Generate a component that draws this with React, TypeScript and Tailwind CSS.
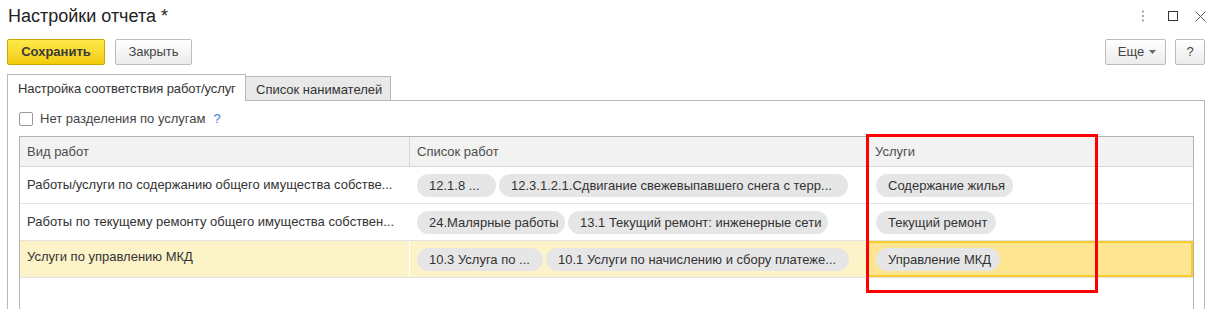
import React from 'react';

const font = { fontFamily: '"Liberation Sans", Arial, sans-serif' };

function Pill({ children, w }: { children: React.ReactNode; w: number }) {
    return (
        <span
            className="block shrink-0 h-[23px] pl-[12px] pr-[8px] rounded-full bg-[#e6e6e6] text-[#333] text-[13px] leading-[23px] whitespace-nowrap overflow-hidden"
            style={{ width: w }}
        >
            {children}
        </span>
    );
}

const rows = [
    {
        kind: 'Работы/услуги по содержанию общего имущества собстве...',
        works: [
            ['12.1.8 ...', 79],
            ['12.3.1.2.1.Сдвигание свежевыпавшего снега с терр...', 349],
        ] as [string, number][],
        service: ['Содержание жилья', 137] as [string, number],
    },
    {
        kind: 'Работы по текущему ремонту общего имущества собствен...',
        works: [
            ['24.Малярные работы', 148],
            ['13.1 Текущий ремонт: инженерные сети', 260],
        ] as [string, number][],
        service: ['Текущий ремонт', 120] as [string, number],
    },
    {
        kind: 'Услуги по управлению МКД',
        works: [
            ['10.3 Услуга по ...', 126],
            ['10.1 Услуги по начислению и сбору платеже...', 303],
        ] as [string, number][],
        service: ['Управление МКД', 124] as [string, number],
    },
];

export default function App() {
    return (
        <div className="relative w-[1215px] h-[309px] overflow-hidden bg-white text-[#333]" style={font}>
            {/* title bar */}
            <div className="flex items-start justify-between h-[37px] pl-[8px] pr-[9px] pt-[5px]">
                <h1 className="text-[18px] leading-[22px] text-[#222]">Настройки отчета *</h1>
                <div className="flex items-center pt-[5px]">
                    <svg width="4" height="12" viewBox="0 0 4 12" className="mr-[23px]">
                        <circle cx="2" cy="1.5" r="1" fill="#8c8c8c" />
                        <circle cx="2" cy="6" r="1" fill="#8c8c8c" />
                        <circle cx="2" cy="10.5" r="1" fill="#8c8c8c" />
                    </svg>
                    <svg width="10" height="10" viewBox="0 0 10 10" className="mr-[17px]">
                        <rect x="0.5" y="0.5" width="9" height="9" fill="none" stroke="#333" strokeWidth="1" />
                    </svg>
                    <svg width="11" height="11" viewBox="0 0 11 11">
                        <path d="M0.5 0.5 L10.5 10.5 M10.5 0.5 L0.5 10.5" stroke="#555" strokeWidth="1" />
                    </svg>
                </div>
            </div>

            {/* toolbar */}
            <div className="flex items-center justify-between h-[26px] mt-[2px] pl-[7px] pr-[10px]">
                <div className="flex gap-[10px]">
                    <button className="h-[26px] w-[98px] rounded-[2px] border border-[#c9a800] bg-gradient-to-b from-[#ffe948] to-[#f2cb00] text-[13px] font-bold text-[#3a3a3a]">
                        Сохранить
                    </button>
                    <button className="h-[26px] w-[77px] rounded-[2px] border border-[#bcbcbc] bg-gradient-to-b from-white to-[#ebebeb] text-[13px] text-[#444]">
                        Закрыть
                    </button>
                </div>
                <div className="flex gap-[9px]">
                    <button className="h-[26px] w-[61px] rounded-[2px] border border-[#bcbcbc] bg-gradient-to-b from-white to-[#ebebeb] text-[13px] text-[#444] flex items-center justify-center gap-[5px] pl-[3px]">
                        Еще
                        <svg width="7" height="4" viewBox="0 0 7 4">
                            <path d="M0 0 L7 0 L3.5 4 Z" fill="#666" />
                        </svg>
                    </button>
                    <button className="h-[26px] w-[30px] rounded-[2px] border border-[#bcbcbc] bg-gradient-to-b from-white to-[#ebebeb] text-[13px] text-[#444]">
                        ?
                    </button>
                </div>
            </div>

            {/* tabs */}
            <div className="flex items-end mt-[10px] pl-[7px] h-[26px]">
                <div className="relative z-10 h-[27px] w-[239px] pl-[10px] border border-b-0 border-[#b8b8b8] bg-white text-[13px] leading-[27px] tracking-[-0.1px] text-[#333] whitespace-nowrap">
                    Настройка соответствия работ/услуг
                </div>
                <div className="h-[25px] w-[145px] pl-[10px] border border-l-0 border-[#b8b8b8] bg-[#e9e9e9] text-[13px] leading-[25px] text-[#333] whitespace-nowrap">
                    Список нанимателей
                </div>
            </div>

            {/* panel */}
            <div className="ml-[7px] mr-[10px] -mt-[1px] h-[220px] border border-[#b8b8b8] pl-[11px] pr-[10px]">
                <label className="flex items-center gap-[7px] h-[35px] pt-[1px]">
                    <span className="w-[14px] h-[14px] rounded-[2px] border border-[#999] bg-white" />
                    <span className="text-[13px] text-[#444]">Нет разделения по услугам</span>
                    <span className="text-[13px] text-[#2a7fd4] ml-[1px]">?</span>
                </label>

                <div className="border border-[#b3b3b3] h-[200px]">
                    <div className="grid grid-cols-[390px_457px_1fr] h-[30px] bg-[#f2f2f2] border-b border-[#d6d6d6] text-[13px] text-[#4d4d4d]">
                        <div className="pl-[7px] leading-[30px] border-r border-[#d6d6d6]">Вид работ</div>
                        <div className="pl-[7px] leading-[30px] border-r border-[#d6d6d6]">Список работ</div>
                        <div className="pl-[8px] leading-[30px]">Услуги</div>
                    </div>
                    {rows.map((r, i) => {
                        const sel = i === 2;
                        return (
                            <div
                                key={i}
                                className={
                                    sel
                                        ? 'grid grid-cols-[390px_457px_1fr] h-[37px] border-b border-[#e3e3e3] bg-[#fdf3c9]'
                                        : 'grid grid-cols-[390px_457px_1fr] h-[37px] border-b border-[#e3e3e3]'
                                }
                            >
                                <div
                                    className={
                                        sel
                                            ? 'pl-[7px] pt-[6px] text-[13px] text-[#333] whitespace-nowrap border-r border-white'
                                            : 'pl-[7px] leading-[36px] text-[13px] text-[#333] whitespace-nowrap'
                                    }
                                >
                                    {r.kind}
                                </div>
                                <div className="flex items-center gap-[3px] pl-[7px]">
                                    {r.works.map(([w, n]) => (
                                        <Pill key={w} w={n}>
                                            {w}
                                        </Pill>
                                    ))}
                                </div>
                                <div
                                    className={
                                        sel
                                            ? 'flex items-center pl-[7px] bg-[#fde591] border-2 border-[#f8cb2a]'
                                            : 'flex items-center pl-[9px]'
                                    }
                                >
                                    <Pill w={r.service[1]}>{r.service[0]}</Pill>
                                </div>
                            </div>
                        );
                    })}
                </div>
            </div>

            {/* red annotation frame */}
            <div className="absolute left-[866px] top-[134px] w-[232px] h-[159px] border-[3px] border-[#ff0000] pointer-events-none" />
        </div>
    );
}
